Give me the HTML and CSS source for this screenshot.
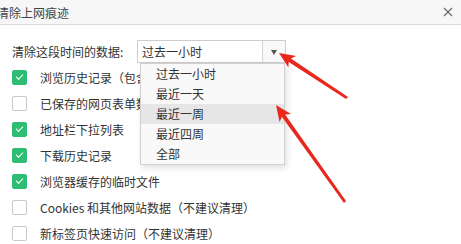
FILE: index.html
```html
<!DOCTYPE html>
<html lang="zh-CN">
<head>
    <meta charset="UTF-8">
    <title>清除上网痕迹</title>
    <link rel="stylesheet" href="styles.css">
</head>
<body>
    <div class="dialog">
        <div class="titlebar">
            <span class="title">清除上网痕迹</span>
            <svg class="close" width="10" height="10" viewBox="0 0 10 10">
                <path d="M1 1 L9 9 M9 1 L1 9" stroke="#666" stroke-width="1.1" fill="none"/>
            </svg>
        </div>

        <div class="content">
            <div class="range-row">
                <span class="range-label">清除这段时间的数据:</span>
                <div class="select">
                    <span class="select-value">过去一小时</span>
                    <span class="select-btn"><i class="caret"></i></span>
                    <ul class="dropdown">
                        <li>过去一小时</li>
                        <li>最近一天</li>
                        <li class="hover">最近一周</li>
                        <li>最近四周</li>
                        <li>全部</li>
                    </ul>
                </div>
            </div>

            <ul class="options">
                <li><span class="check on"></span>浏览历史记录（包含搜索记录）</li>
                <li><span class="check"></span>已保存的网页表单数据</li>
                <li><span class="check on"></span>地址栏下拉列表</li>
                <li><span class="check on"></span>下载历史记录</li>
                <li><span class="check on"></span>浏览器缓存的临时文件</li>
                <li><span class="check"></span>Cookies 和其他网站数据（不建议清理）</li>
                <li><span class="check"></span>新标签页快速访问（不建议清理）</li>
            </ul>
        </div>

        <!-- annotation arrows -->
        <svg class="arrows" width="461" height="244" viewBox="0 0 461 244">
            <polygon fill="#e8271d" points="279,53 288.4,67.6 288.7,61.9 346,99 348,97 290.9,58.5 296.2,56"/>
            <polygon fill="#e8271d" points="276,105 279.6,122.1 281.9,116.8 344,203 346,201 285.1,114.4 291,113.9"/>
        </svg>
    </div>
</body>
</html>
```

FILE: styles.css
```css
body {
    margin: 0;
    font-family: "Noto Sans CJK SC", "Noto Sans", sans-serif;
    font-size: 12px;
    color: #333;
    background: #fff;
}

.dialog {
    position: relative;
    width: 461px;
    height: 244px;
    overflow: hidden;
    background: #fff;
}

.titlebar {
    height: 24px;
    display: flex;
    align-items: center;
    justify-content: space-between;
    background: #f7f7f7;
    border-bottom: 1px solid #dcdcdc;
    padding-right: 8px;
}

.title {
    margin-left: -3px;
    font-size: 12px;
    color: #444;
}

.close {
    display: block;
}

.content {
    padding-top: 15px;
}

.range-row {
    display: flex;
    align-items: center;
    padding-left: 12px;
}

.range-label {
    width: 125px;
}

.select {
    position: relative;
    display: flex;
    width: 147px;
    height: 21px;
    border: 1px solid #cdcdcd;
    background: #fff;
}

.select-value {
    flex: 1;
    line-height: 21px;
    padding-left: 4px;
}

.select-btn {
    width: 22px;
    border-left: 1px solid #d6d6d6;
    background: #f8f8f8;
    display: flex;
    align-items: center;
    justify-content: center;
}

.caret {
    width: 0;
    height: 0;
    margin-top: 2px;
    border-left: 3px solid transparent;
    border-right: 3px solid transparent;
    border-top: 5px solid #555;
}

.dropdown {
    position: absolute;
    left: 2px;
    top: 22px;
    width: 143px;
    margin: 0;
    padding: 0;
    list-style: none;
    background: #f9f9f9;
    border: 1px solid #d0d0d0;
    box-shadow: 2px 3px 6px rgba(0, 0, 0, 0.12);
    z-index: 2;
}

.dropdown li {
    height: 20px;
    line-height: 20px;
    padding-left: 15px;
}

.dropdown li.hover {
    background: #e6e6e6;
}

.options {
    list-style: none;
    margin: 1px 0 0;
    padding: 0 0 0 12px;
}

.options li {
    height: 26px;
    display: flex;
    align-items: center;
    white-space: nowrap;
}

.check {
    width: 13px;
    height: 13px;
    border: 1px solid #c9c9c9;
    border-radius: 2px;
    margin-right: 13px;
    position: relative;
    background: #fff;
}

.check.on {
    background: #2dbe73;
    border-color: #2dbe73;
}

.check.on::after {
    content: "";
    position: absolute;
    left: 3px;
    top: 3px;
    width: 6px;
    height: 3px;
    border-left: 1.5px solid #fff;
    border-bottom: 1.5px solid #fff;
    transform: rotate(-45deg);
}

.arrows {
    position: absolute;
    left: 0;
    top: 0;
    z-index: 3;
}
```
